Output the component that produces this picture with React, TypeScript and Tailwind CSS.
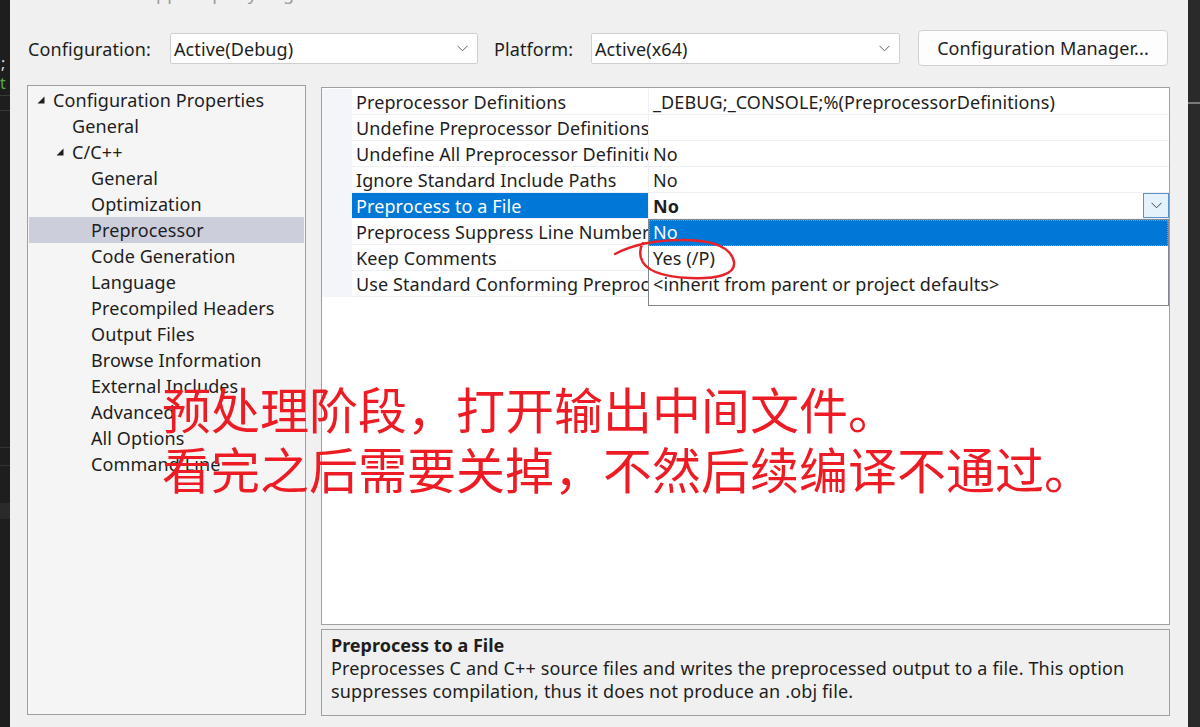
import React from 'react';

const Chevron = ({ color = '#606060' }: { color?: string }) => (
  <svg width="11" height="7" viewBox="0 0 11 7" fill="none">
    <path d="M0.5 0.8 L5.5 5.8 L10.5 0.8" stroke={color} strokeWidth="1" />
  </svg>
);

const Tri = () => (
  <svg width="8" height="8" viewBox="0 0 8 8">
    <polygon points="7.5,0.5 7.5,7.5 0.5,7.5" fill="#1e1e1e" />
  </svg>
);

type TreeItem = { t: string; l: number; e?: boolean; s?: boolean };

const tree: TreeItem[] = [
  { t: 'Configuration Properties', l: 0, e: true },
  { t: 'General', l: 1 },
  { t: 'C/C++', l: 1, e: true },
  { t: 'General', l: 2 },
  { t: 'Optimization', l: 2 },
  { t: 'Preprocessor', l: 2, s: true },
  { t: 'Code Generation', l: 2 },
  { t: 'Language', l: 2 },
  { t: 'Precompiled Headers', l: 2 },
  { t: 'Output Files', l: 2 },
  { t: 'Browse Information', l: 2 },
  { t: 'External Includes', l: 2 },
  { t: 'Advanced', l: 2 },
  { t: 'All Options', l: 2 },
  { t: 'Command Line', l: 2 },
];

const rows = [
  { n: 'Preprocessor Definitions', v: '_DEBUG;_CONSOLE;%(PreprocessorDefinitions)' },
  { n: 'Undefine Preprocessor Definitions', v: '' },
  { n: 'Undefine All Preprocessor Definitions', v: 'No' },
  { n: 'Ignore Standard Include Paths', v: 'No' },
  { n: 'Preprocess to a File', v: 'No', sel: true },
  { n: 'Preprocess Suppress Line Numbers', v: '' },
  { n: 'Keep Comments', v: '' },
  { n: 'Use Standard Conforming Preprocessor', v: '' },
];

const indent = ['pl-[8px]', 'pl-[27px]', 'pl-[46px]'];

export default function App() {
  return (
    <div className="flex h-[727px] w-[1200px] overflow-hidden font-['Noto_Sans',sans-serif] text-[18px] tracking-[0.1px] text-[#1e1e1e]">
      {/* left editor strip */}
      <div className="flex w-[10px] flex-col bg-[#1e1e1e] text-[16px] leading-none">
        <div className="mt-[55px] pl-[1px] text-[#dcdcdc]">;</div>
        <div className="mt-[4px] text-[#57a64a]">t</div>
        <div className="mt-[4px] h-[1px] bg-[#3a3a3a]" />
        <div className="mt-[14px] h-[1px] bg-[#3a3a3a]" />
        <div className="mt-[336px] h-[1px] bg-[#333]" />
        <div className="mt-[17px] h-[1px] bg-[#333]" />
        <div className="mt-[37px] h-[16px] bg-[#2a2a2a]" />
      </div>

      {/* dialog */}
      <div className="relative flex w-[1178px] flex-col bg-[#f0f0f0]">
        <div className="h-[4px] overflow-hidden pl-[66px]">
          <div className="-mt-[20px] text-[18px] text-[#9a9a9a]">ConsoleApp Property Pages</div>
        </div>

        {/* top row */}
        <div className="mt-[26px] flex h-[36px] items-center pl-[18px]">
          <div className="mt-[3px] w-[142px]">Configuration:</div>
          <div className="mt-[1px] flex h-[31px] w-[308px] items-center justify-between rounded-[2px] border border-[#d0d0d0] bg-white pl-[3px] pr-[9px]">
            <span className="mt-[1px]">Active(Debug)</span>
            <Chevron />
          </div>
          <div className="ml-[16px] mt-[3px] w-[97px]">Platform:</div>
          <div className="mt-[1px] flex h-[31px] w-[309px] items-center justify-between rounded-[2px] border border-[#d0d0d0] bg-white pl-[3px] pr-[9px]">
            <span className="mt-[1px]">Active(x64)</span>
            <Chevron />
          </div>
          <div className="ml-[18px] flex h-[36px] w-[250px] items-center justify-center rounded-[4px] border border-[#d0d0d0] bg-[#fdfdfd]">
            Configuration Manager...
          </div>
        </div>

        {/* main */}
        <div className="mt-[19px] flex pl-[17px]">
          {/* tree */}
          <div className="flex h-[630px] w-[279px] flex-col border border-[#a0a0a0] bg-[#f5f5f5] px-[1px] pt-[1px]">
            {tree.map((it, i) => (
              <div
                key={i}
                className={`flex h-[26px] items-center whitespace-nowrap ${indent[it.l]} ${it.s ? 'bg-[#cccedb]' : ''}`}
              >
                <div className="flex w-[16px] items-center">{it.e ? <Tri /> : null}</div>
                <span>{it.t}</span>
              </div>
            ))}
          </div>

          {/* right */}
          <div className="ml-[15px] mt-[2px] flex flex-col">
            <div className="relative h-[538px] w-[849px] border border-[#a0a0a0] bg-white">
              <div className="flex flex-col pt-[1px]">
                {rows.map((r, i) => (
                  <div key={i} className="flex h-[26px]">
                    <div className="w-[30px] bg-[#f3f5fa]" />
                    <div
                      className={`flex w-[296px] items-center overflow-hidden whitespace-nowrap border-b border-[#eef0f5] pl-[4px] pt-[1px] ${
                        r.sel ? 'bg-[#0078d7] text-white' : ''
                      }`}
                    >
                      {r.n}
                    </div>
                    <div className="flex flex-1 items-center justify-between border-b border-l border-[#eef0f5] pl-[4px]">
                      <span className={`mt-[1px] ${r.sel ? 'font-bold' : ''}`}>{r.v}</span>
                      {r.sel ? (
                        <div className="flex h-[25px] w-[26px] items-center justify-center border border-[#5a93c8] bg-[#e5f1fb]">
                          <Chevron color="#404040" />
                        </div>
                      ) : null}
                    </div>
                  </div>
                ))}
              </div>

              {/* dropdown list */}
              <div className="absolute left-[326px] top-[131px] flex h-[87px] w-[521px] flex-col border border-[#828790] bg-white">
                <div className="flex h-[26px] items-center bg-[#0078d7] pb-[1px] pl-[4px] text-white outline-1 -outline-offset-1 outline-dotted outline-[#c98a4a]">
                  No
                </div>
                <div className="flex h-[26px] items-center pb-[1px] pl-[4px]">Yes (/P)</div>
                <div className="flex h-[26px] items-center pb-[1px] pl-[4px]">&lt;inherit from parent or project defaults&gt;</div>
              </div>
            </div>

            {/* description */}
            <div className="mt-[4px] flex h-[87px] w-[849px] flex-col border border-[#a0a0a0] bg-[#f0f0f0] pl-[9px] pt-[4px] leading-[23px] tracking-[0.15px]">
              <div className="font-bold tracking-normal">Preprocess to a File</div>
              <div>
                Preprocesses C and C++ source files and writes the preprocessed output to a file. This option
                <br />
                suppresses compilation, thus it does not produce an .obj file.
              </div>
            </div>
          </div>
        </div>

        {/* red annotation text */}
        <div className="absolute left-[152px] top-[378px] font-['Noto_Sans_CJK_SC',sans-serif] text-[49px] leading-[60px] tracking-normal text-[#ed1c24]">
          <div>预处理阶段，打开输出中间文件。</div>
          <div>看完之后需要关掉，不然后续编译不通过。</div>
        </div>

        {/* red circle */}
        <svg
          className="pointer-events-none absolute left-0 top-0"
          width="1178"
          height="727"
          viewBox="10 0 1178 727"
          fill="none"
        >
          <path
            d="M615 254 C 630 246, 652 240, 682 240 C 712 240, 731 246, 734 262 C 736 275, 716 279, 690 278 C 665 277, 645 272, 641 258 C 639 250, 641 246, 643 243"
            stroke="#e5232b"
            strokeWidth="2.5"
            strokeLinecap="round"
          />
        </svg>
      </div>

      {/* right strip */}
      <div className="flex w-[12px] flex-col bg-[#2a2a2a]">
        <div className="mt-[102px] h-[2px] bg-[#7a7a7a]" />
      </div>
    </div>
  );
}
